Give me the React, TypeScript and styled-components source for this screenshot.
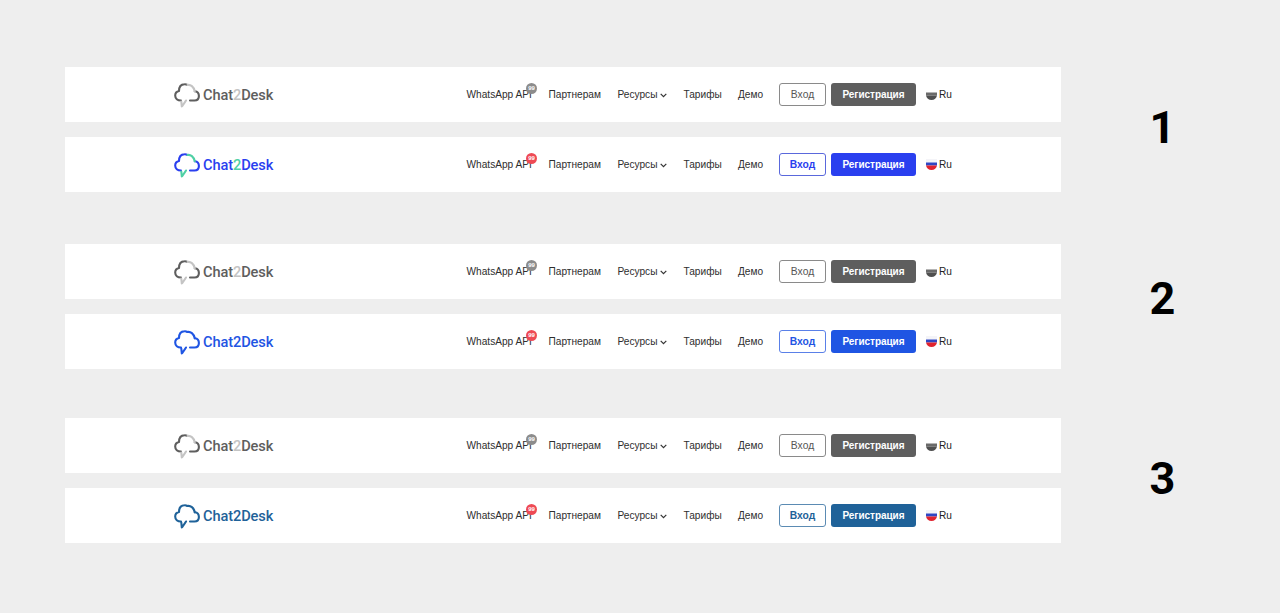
import React from "react";
import styled, { createGlobalStyle } from "styled-components";

type Palette = {
  main: string;
  accent: string;
  badge: string;
  flagTop: string;
  flagBlue: string;
  flagRed: string;
  outline: string;
};

const GRAY: Palette = {
  main: "#5e5e5e",
  accent: "#c4c4c4",
  badge: "#8c8c8c",
  flagTop: "#ffffff",
  flagBlue: "#6a6a6a",
  flagRed: "#4f4f4f",
  outline: "#8a8a8a",
};

const VARIANTS: { label: string; bottom: number; after: number; color: Palette }[] = [
  {
    label: "1",
    bottom: 3,
    after: 52,
    color: { main: "#2a3fef", accent: "#4fd0a5", badge: "#ee4a55", flagTop: "#f4f4f8", flagBlue: "#2f46c4", flagRed: "#e0232f", outline: "#5a68dc" },
  },
  {
    label: "2",
    bottom: 16,
    after: 49,
    color: { main: "#1f55e3", accent: "#1f55e3", badge: "#ee4a55", flagTop: "#f4f4f8", flagBlue: "#2f46c4", flagRed: "#e0232f", outline: "#5a80e8" },
  },
  {
    label: "3",
    bottom: 4,
    after: 0,
    color: { main: "#1f6299", accent: "#1f6299", badge: "#ee4a55", flagTop: "#f4f4f8", flagBlue: "#2f46c4", flagRed: "#e0232f", outline: "#5b8bb3" },
  },
];

const GlobalStyle = createGlobalStyle`
  html, body {
    margin: 0;
    padding: 0;
    background: #eeeeee;
  }
`;

const Page = styled.div`
  width: 1280px;
  height: 613px;
  box-sizing: border-box;
  padding: 67px 0 0 65px;
  background: #eeeeee;
  overflow: hidden;
  font-family: "Liberation Sans", Arial, sans-serif;
`;

const Group = styled.section<{ $after: number }>`
  display: flex;
  align-items: center;
  margin-bottom: ${(p) => p.$after}px;
`;

const Bars = styled.div`
  width: 996px;
  display: flex;
  flex-direction: column;
  gap: 15px;
`;

const Number = styled.div<{ $bottom: number }>`
  width: 203px;
  text-align: center;
  font-family: Roboto, sans-serif;
  font-weight: 700;
  font-size: 45px;
  line-height: 46px;
  color: #000;
  margin-bottom: ${(p) => p.$bottom}px;
`;

const Bar = styled.header`
  height: 55px;
  background: #ffffff;
  display: flex;
  align-items: center;
  padding-left: 109px;
`;

const Logo = styled.div`
  width: 292.5px;
  display: flex;
  align-items: center;
  gap: 3px;
  margin-top: 2px;
`;

const LogoMark = styled.svg`
  width: 26px;
  height: 25px;
  flex: none;
`;

const LogoText = styled.span<{ $color: string }>`
  font-family: Roboto, sans-serif;
  font-weight: 500;
  font-size: 14.6px;
  letter-spacing: -0.1px;
  color: ${(p) => p.$color};
  margin-top: -2px;
`;

const LogoTwo = styled.span<{ $color: string }>`
  color: ${(p) => p.$color};
`;

const NavItem = styled.a<{ $width: number }>`
  position: relative;
  width: ${(p) => p.$width}px;
  display: flex;
  align-items: center;
  gap: 3px;
  margin-top: -1px;
  font-size: 10.15px;
  color: #2e2e2e;
  white-space: nowrap;
`;

const Badge = styled.span<{ $color: string }>`
  position: absolute;
  left: 59.5px;
  top: -6px;
  width: 11px;
  height: 11px;
  border-radius: 50%;
  background: ${(p) => p.$color};
  color: #fff;
  font-size: 6px;
  font-weight: 700;
  line-height: 11px;
  text-align: center;
`;

const Chevron = styled.svg`
  width: 7px;
  height: 5px;
  margin-top: 2px;
`;

const LoginButton = styled.button<{ $color: string; $border: string; $bold: boolean }>`
  width: 47px;
  height: 23px;
  box-sizing: border-box;
  padding: 0 0 1px;
  margin-right: 5px;
  border: 1px solid ${(p) => p.$border};
  border-radius: 3px;
  background: #fff;
  color: ${(p) => p.$color};
  font-family: inherit;
  font-size: 10.3px;
  font-weight: ${(p) => (p.$bold ? 700 : 400)};
`;

const SignupButton = styled.button<{ $color: string }>`
  width: 85px;
  height: 23px;
  padding: 0 0 1px;
  margin-right: 10px;
  border: 0;
  border-radius: 3px;
  background: ${(p) => p.$color};
  color: #fff;
  font-family: inherit;
  font-size: 10px;
  font-weight: 700;
  letter-spacing: -0.05px;
`;

const Lang = styled.div`
  display: flex;
  align-items: center;
  gap: 2px;
  margin-top: -1px;
  font-size: 10.15px;
  color: #222222;
`;

const Flag = styled.svg`
  width: 11px;
  height: 11px;
  margin-top: 1px;
`;

const CloudLogo: React.FC<{ color: string; accent: string }> = ({ color, accent }) => (
  <LogoMark viewBox="0 0 26 25" fill="none" strokeWidth="2.1" strokeLinecap="round" strokeLinejoin="round">
    <path
      d="M7 17.5C3.5 17.5 1.2 15.5 1.2 12.5C1.2 10 2.8 8.4 5 8C5 4.2 7 1.5 10.5 1.3C11.6 1.2 12.6 1.5 13.5 2"
      stroke={color}
    />
    <path
      d="M16 17.5H20.5C23.3 17.5 24.9 15.6 24.9 13C24.9 10.6 23.3 8.6 20.8 8.3"
      stroke={color}
    />
    <path
      d="M13.5 2C16.5 1.4 19.8 3.6 20.8 8.3M12 17.5C10.5 20 9.2 21.6 7.8 23.5L7.3 18.5"
      stroke={accent}
    />
  </LogoMark>
);

const RuFlag: React.FC<{ top: string; blue: string; red: string }> = ({ top, blue, red }) => (
  <Flag viewBox="0 0 11 11">
    <rect x="0" y="0" width="11" height="3.5" fill={top} />
    <rect x="0" y="3.5" width="11" height="3" fill={blue} />
    <path d="M0 6.5H11C10.6 9.2 8.3 11 5.5 11C2.7 11 0.4 9.2 0 6.5Z" fill={red} />
  </Flag>
);

const HeaderBar: React.FC<{ color: Palette; gray?: boolean }> = ({ color, gray }) => (
  <Bar>
    <Logo>
      <CloudLogo color={color.main} accent={color.accent} />
      <LogoText $color={color.main}>
        Chat<LogoTwo $color={color.accent}>2</LogoTwo>Desk
      </LogoText>
    </Logo>
    <NavItem $width={82}>
      WhatsApp API
      <Badge $color={color.badge}>99</Badge>
    </NavItem>
    <NavItem $width={69}>Партнерам</NavItem>
    <NavItem $width={66}>
      Ресурсы
      <Chevron viewBox="0 0 7 5" fill="none" stroke="#333333" strokeWidth="1.2">
        <path d="M0.7 0.8L3.5 3.6L6.3 0.8" />
      </Chevron>
    </NavItem>
    <NavItem $width={54.5}>Тарифы</NavItem>
    <NavItem $width={41}>Демо</NavItem>
    <LoginButton $color={gray ? "#555555" : color.main} $border={color.outline} $bold={!gray}>
      Вход
    </LoginButton>
    <SignupButton $color={color.main}>Регистрация</SignupButton>
    <Lang>
      <RuFlag top={color.flagTop} blue={color.flagBlue} red={color.flagRed} />
      Ru
    </Lang>
  </Bar>
);

export default function App() {
  return (
    <Page>
      <GlobalStyle />
      {VARIANTS.map((v) => (
        <Group key={v.label} $after={v.after}>
          <Bars>
            <HeaderBar color={GRAY} gray />
            <HeaderBar color={v.color} />
          </Bars>
          <Number $bottom={v.bottom}>{v.label}</Number>
        </Group>
      ))}
    </Page>
  );
}
